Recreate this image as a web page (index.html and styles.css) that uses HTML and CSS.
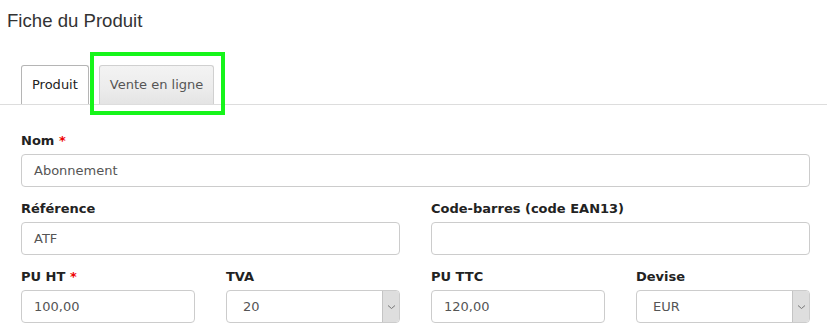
FILE: index.html
```html
<!DOCTYPE html>
<html lang="fr">
<head>
<meta charset="utf-8">
<title>Fiche du Produit</title>
<link rel="stylesheet" href="styles.css">
</head>
<body>
<div class="page">
  <h1 class="title">Fiche du Produit</h1>
  <div class="tabs">
    <div class="tab tab-active">Produit</div>
    <div class="tab tab-inactive">Vente en ligne</div>
    <div class="highlight"></div>
  </div>
  <form class="form">
    <div class="row row-1">
      <div class="field">
        <label class="label">Nom <span class="req">*</span></label>
        <div class="input">Abonnement</div>
      </div>
    </div>
    <div class="row row-2">
      <div class="field">
        <label class="label">Référence</label>
        <div class="input">ATF</div>
      </div>
      <div class="field">
        <label class="label">Code-barres (code EAN13)</label>
        <div class="input"></div>
      </div>
    </div>
    <div class="row row-4">
      <div class="field">
        <label class="label">PU HT <span class="req">*</span></label>
        <div class="input">100,00</div>
      </div>
      <div class="field">
        <label class="label">TVA</label>
        <div class="select"><span class="select-text">20</span><span class="arrow"><svg width="9" height="6" viewBox="0 0 9 6"><path d="M1 1.5 L4.5 4.5 L8 1.5" fill="none" stroke="#777" stroke-width="1"/></svg></span></div>
      </div>
      <div class="field">
        <label class="label">PU TTC</label>
        <div class="input">120,00</div>
      </div>
      <div class="field">
        <label class="label">Devise</label>
        <div class="select"><span class="select-text">EUR</span><span class="arrow"><svg width="9" height="6" viewBox="0 0 9 6"><path d="M1 1.5 L4.5 4.5 L8 1.5" fill="none" stroke="#777" stroke-width="1"/></svg></span></div>
      </div>
    </div>
  </form>
</div>
</body>
</html>
```

FILE: styles.css
```css
html, body {
  margin: 0;
  padding: 0;
  background: #fff;
}
.page {
  font-family: "DejaVu Sans", Verdana, sans-serif;
  font-size: 13px;
  color: #333;
}
.title {
  margin: 0;
  padding: 10px 0 0 7px;
  height: 55px;
  box-sizing: border-box;
  font-family: "Liberation Sans", Arial, sans-serif;
  font-weight: normal;
  font-size: 18.6px;
  line-height: 21px;
  color: #333;
}
.tabs {
  position: relative;
  display: flex;
  gap: 10px;
  padding: 10px 0 0 21px;
  border-bottom: 1px solid #ddd;
  height: 39px;
}
.tab {
  height: 39px;
  box-sizing: border-box;
  padding: 0 10px;
  line-height: 38px;
  border: 1px solid #ccc;
  border-bottom: none;
  border-radius: 3px 3px 0 0;
}
.tab-active {
  background: #fff;
  border-color: #b5b5b5;
  color: #222;
}
.tab-inactive {
  background: linear-gradient(#f3f3f3, #ececec 60%, #e4e4e4);
  color: #555;
  border-color: #d0d0d0;
}
.highlight {
  position: absolute;
  left: 90px;
  top: -3px;
  width: 135px;
  height: 63px;
  box-sizing: border-box;
  border: 4px solid #16f51a;
}
.form {
  padding: 27px 17px 0 21px;
}
.row {
  display: grid;
  column-gap: 31px;
  margin-bottom: 13px;
}
.row-1 { grid-template-columns: 1fr; }
.row-2 { grid-template-columns: 1fr 1fr; }
.row-4 { grid-template-columns: 1fr 1fr 1fr 1fr; }
.field {
  display: flex;
  flex-direction: column;
}
.label {
  font-weight: bold;
  font-size: 13px;
  line-height: 17px;
  color: #222;
  margin-bottom: 5px;
}
.req {
  color: #e00;
}
.input, .select {
  height: 33px;
  box-sizing: border-box;
  border: 1px solid #ccc;
  border-radius: 4px;
  background: #fff;
  color: #555;
  font-size: 13px;
  line-height: 32px;
  padding-left: 12px;
}
.select {
  display: flex;
  padding-left: 16px;
  overflow: hidden;
}
.select-text {
  flex: 1;
}
.arrow {
  width: 16px;
  background: #dedede;
  border-left: 1px solid #c4c4c4;
  display: flex;
  align-items: center;
  justify-content: center;
}
```
